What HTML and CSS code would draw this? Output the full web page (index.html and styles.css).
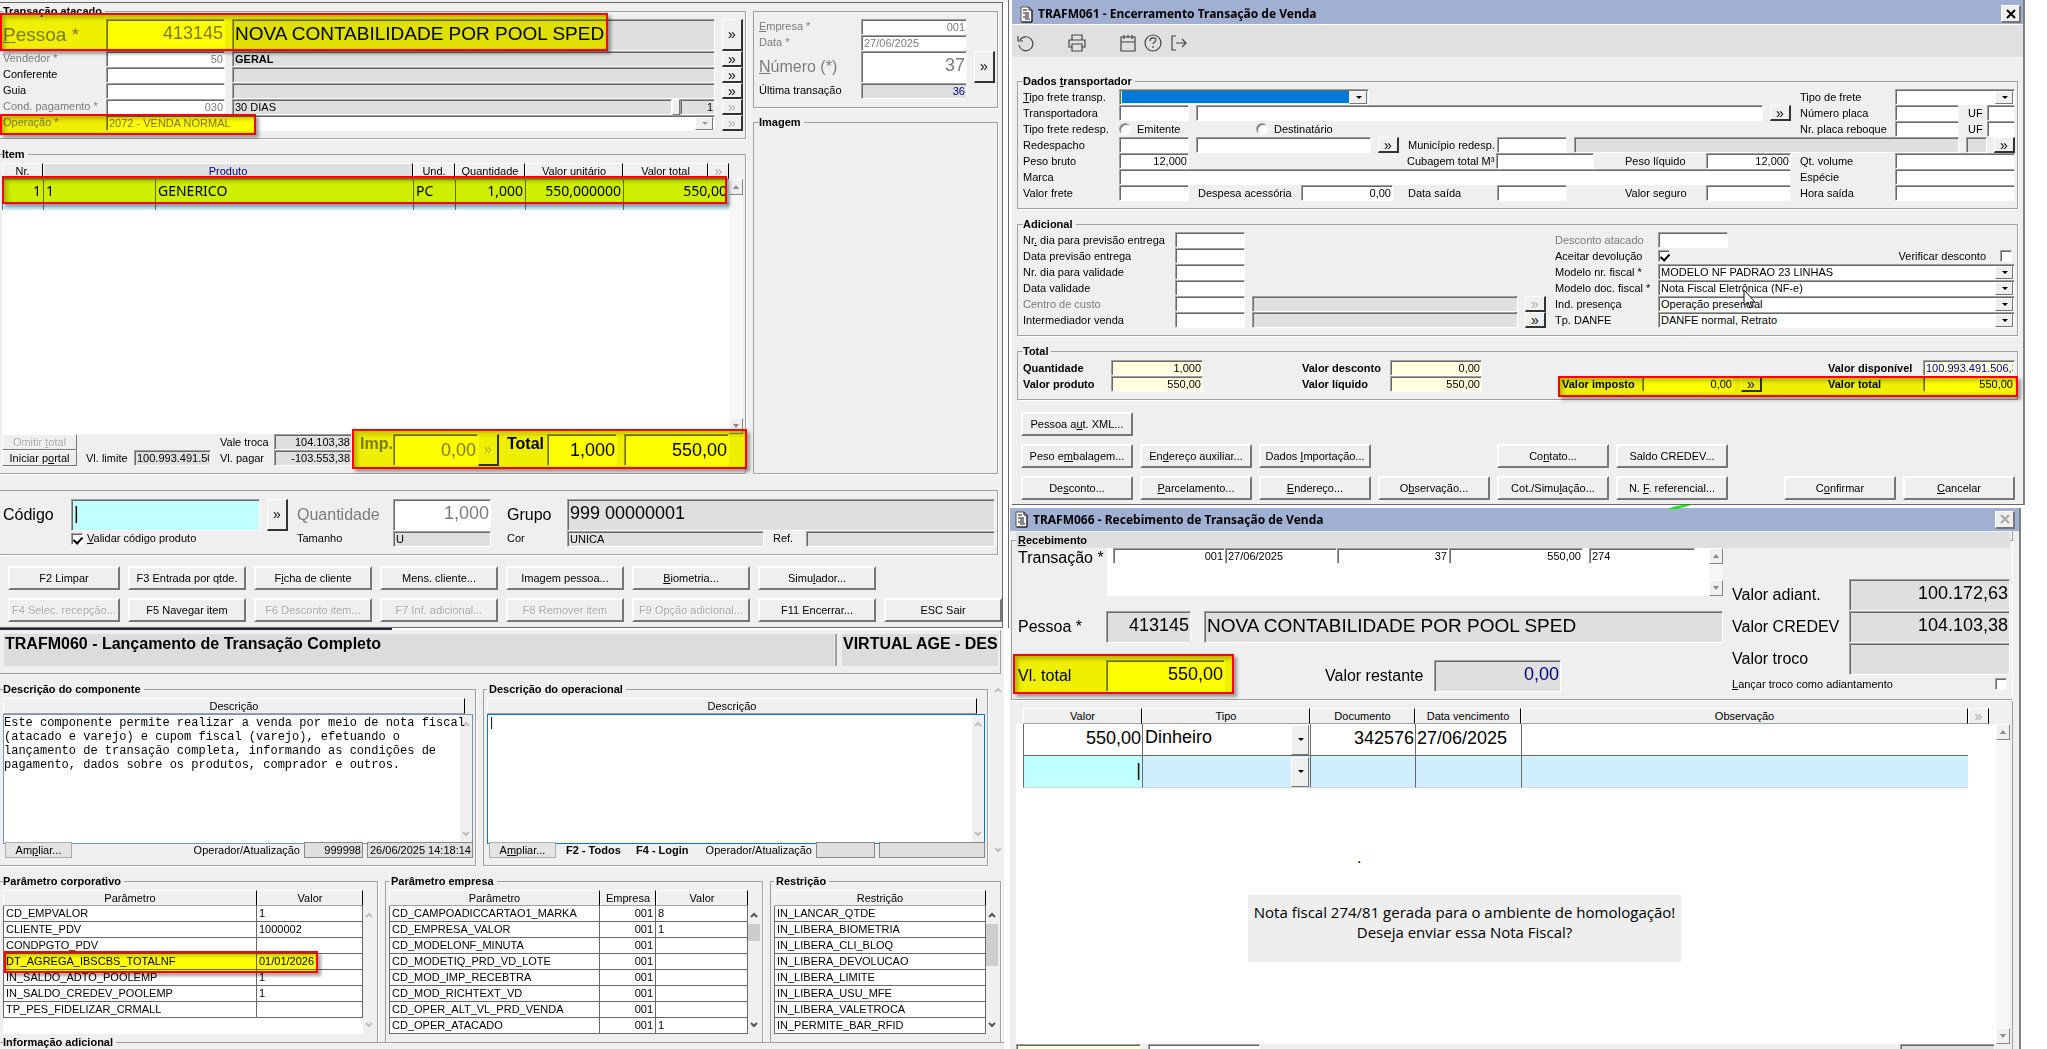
FILE: index.html
```html
<!DOCTYPE html>
<html lang="pt-BR">
<head>
    <meta charset="UTF-8">
    <meta name="viewport" content="width=device-width, initial-scale=1.0">
    <title>Transação de Venda</title>
    <link rel="stylesheet" href="styles.css">
</head>
<body>
    <svg class="defs" aria-hidden="true">
        <symbol id="doc" viewBox="0 0 13 17">
            <path d="M1 1h8l3 3v12H1z" fill="#fff" stroke="#555"/>
            <path d="M9 1v3h3" fill="none" stroke="#111"/>
            <path d="M3 4h4M3 7h6M5 9h4M3 11h6M5 13h5" stroke="#111" stroke-width="1"/>
            <path d="M12 4v12H2" fill="none" stroke="#111"/>
        </symbol>
        <symbol id="chev" viewBox="0 0 8 8"><path d="M1 6l3-3 3 3" fill="none" stroke="currentColor" stroke-width="2"/></symbol>
        <symbol id="tri" viewBox="0 0 8 8"><path d="M1 6l3-4 3 4z" fill="#8a8a8a"/></symbol>
        <symbol id="cross" viewBox="0 0 10 10"><path d="M1 1l8 8M9 1l-8 8" stroke="currentColor" stroke-width="2"/></symbol>
    </svg>

    <main class="desk">
        <div class="left-col">
            <!-- TRAFM060: lançamento -->
            <div class="sale-edge">
            <section class="window sale">
                <div class="sale-top">
                    <div class="sale-main">
                        <fieldset class="cut">
                            <legend>Transação atacado</legend>
                            <div class="row tall"><label class="w-96 big dim" for="pessoa"><u>P</u>essoa *</label><input id="pessoa" class="w-119 num dim" value="413145"><input class="grow ro name" readonly aria-label="Nome pessoa" value="NOVA CONTABILIDADE POR POOL SPED"><button class="more">»</button></div>
                            <div class="row"><label class="w-96 dim" for="vend">Vendedor *</label><input id="vend" class="w-119 num dim" value="50"><input class="grow ro strong" readonly aria-label="Nome vendedor" value="GERAL"><button class="more">»</button></div>
                            <div class="row"><label class="w-96" for="conf">Conferente</label><input id="conf" class="w-119"><input class="grow ro" readonly aria-label="Nome conferente"><button class="more">»</button></div>
                            <div class="row"><label class="w-96" for="guia">Guia</label><input id="guia" class="w-119"><input class="grow ro" readonly aria-label="Nome guia"><button class="more">»</button></div>
                            <div class="row"><label class="w-96 dim" for="cond">Cond. pagamento *</label><input id="cond" class="w-119 num dim" value="030"><span class="pay grow"><input class="grow ro" readonly aria-label="Condição" value="30 DIAS"><i class="thumb"></i><input class="w-35 ro num" readonly aria-label="Parcelas" value="1"></span><button class="more" disabled>»</button></div>
                            <div class="row"><label class="w-96 dim" for="oper">Operação *</label><span class="combo grow off"><select id="oper" disabled><option>2072 - VENDA NORMAL</option></select></span><button class="more" disabled>»</button></div>
                        </fieldset>

                        <fieldset class="cut items">
                            <legend>Item</legend>
                            <div class="item-area">
                                <div class="sheet">
                                    <table class="item-table">
                                        <colgroup><col class="w-41"><col class="w-112"><col><col class="w-42"><col class="w-70"><col class="w-98"><col class="w-85"><col class="w-21"></colgroup>
                                        <thead>
                                            <tr><th>Nr.</th><th colspan="2" class="sel">Produto</th><th>Und.</th><th>Quantidade</th><th>Valor unitário</th><th>Valor total</th><th class="off">»</th></tr>
                                        </thead>
                                        <tbody>
                                            <tr><td class="num">1</td><td>1</td><td>GENERICO</td><td>PC</td><td class="num">1,000</td><td class="num">550,000000</td><td class="num" colspan="2">550,00</td></tr>
                                            <tr class="stub"><td></td><td></td><td></td><td></td><td></td><td></td><td colspan="2"></td></tr>
                                        </tbody>
                                    </table>
                                </div>
                                <div class="bar"><button aria-label="Subir"><svg><use href="#tri"/></svg></button><button aria-label="Descer" class="down"><svg><use href="#tri"/></svg></button></div>
                            </div>
                            <div class="totals">
                                <div class="mini">
                                    <button class="btn" disabled>Omitir <u>t</u>otal</button><span></span><span></span><label for="vtroca">Vale troca</label><input id="vtroca" class="ro num" readonly value="104.103,38">
                                    <button class="btn">Iniciar p<u>o</u>rtal</button><label for="vlim">Vl. limite</label><input id="vlim" class="ro" readonly value="100.993.491.506,38"><label for="vpag">Vl. pagar</label><input id="vpag" class="ro num" readonly value="-103.553,38">
                                </div>
                                <label class="w-41 med strong dim" for="imp">Imp.</label><input id="imp" class="w-85 big-num num dim" value="0,00"><button class="more" disabled>»</button>
                                <label class="w-48 med strong" for="tot">Total</label><input id="tot" class="w-70 big-num num" value="1,000"><input class="grow big-num num gap" aria-label="Valor total" value="550,00">
                            </div>
                        </fieldset>
                    </div>

                    <div class="sale-side">
                        <fieldset>
                            <legend class="blank">&nbsp;</legend>
                            <div class="row"><label class="w-95 dim" for="emp"><u>E</u>mpresa *</label><input id="emp" class="w-106 num dim" value="001"></div>
                            <div class="row"><label class="w-95 dim" for="data">Data *</label><input id="data" class="w-106 dim" value="27/06/2025"></div>
                            <div class="row tall"><label class="w-95 med dim" for="numero"><u>N</u>úmero (*)</label><input id="numero" class="w-106 num dim" value="37"><button class="more">»</button></div>
                            <div class="row"><label class="w-95" for="ult">Última transação</label><input id="ult" class="w-106 ro num navy" readonly value="36"></div>
                        </fieldset>
                        <fieldset class="image-box"><legend>Imagem</legend></fieldset>
                    </div>
                </div>

                <div class="code-box">
                    <div class="row tall"><label class="w-61 med" for="cod">Código</label><input id="cod" class="w-189 cyan" value="|"><button class="more">»</button><label class="w-91 med dim" for="qtd">Quantidade</label><input id="qtd" class="w-98 num dim" value="1,000"><label class="w-62 med far" for="grupo">Grupo</label><input id="grupo" class="grow ro" readonly value="999 00000001"></div>
                    <div class="row"><span class="w-61"></span><label class="w-217 tick"><input type="checkbox" checked><span><u>V</u>alidar código produto</span></label><label class="w-91" for="tam">Tamanho</label><input id="tam" class="w-98 ro" readonly value="U"><label class="w-62 far" for="cor">Cor</label><input id="cor" class="grow ro" readonly value="UNICA"><label class="w-28" for="ref">Ref.</label><input id="ref" class="w-189 ro" readonly></div>
                </div>

                <div class="keys">
                    <button class="btn">F2 Limpar</button><button class="btn">F3 Entrada por qtde.</button><button class="btn">F<u>i</u>cha de cliente</button><button class="btn">Mens. cliente...</button><button class="btn">Ima<u>g</u>em pessoa...</button><button class="btn"><u>B</u>iometria...</button><button class="btn">Simu<u>l</u>ador...</button><span></span>
                    <button class="btn" disabled>F4 Selec. recepção...</button><button class="btn">F5 Navegar item</button><button class="btn" disabled>F6 Desconto item...</button><button class="btn" disabled>F7 Inf. adicional...</button><button class="btn" disabled>F8 Remover item</button><button class="btn" disabled>F9 Opção adicional...</button><button class="btn">F11 Encerrar...</button><button class="btn">ESC Sair</button>
                </div>

                <!-- marcações -->
                <div class="mark mark-person"></div>
                <div class="mark mark-oper"></div>
                <div class="mark mark-item"></div>
                <div class="mark mark-total"></div>
            </section>
            </div>

            <!-- TRAFM060: componente e parâmetros -->
            <section class="component">
                <header class="comp-head"><h1>TRAFM060 - Lançamento de Transação Completo</h1><h2>VIRTUAL AGE - DES</h2></header>
                <div class="descs">
                    <fieldset class="cut desc-a">
                        <legend>Descrição do componente</legend>
                        <div class="th">Descrição</div>
                        <div class="memo"><textarea aria-label="Descrição do componente" wrap="off">Este componente permite realizar a venda por meio de nota fiscal
(atacado e varejo) e cupom fiscal (varejo), efetuando o
lançamento de transação completa, informando as condições de
pagamento, dados sobre os produtos, comprador e outros.</textarea><div class="flat pale"><svg><use href="#chev"/></svg><svg class="down"><use href="#chev"/></svg></div></div>
                        <div class="row foot"><button class="zoom-btn">Am<u>p</u>liar...</button><label class="push" for="op1">Operador/Atualização</label><input id="op1" class="w-59 ro num" readonly value="999998"><input class="w-106 ro" readonly aria-label="Atualização" value="26/06/2025 14:18:14"></div>
                    </fieldset>
                    <fieldset class="desc-b">
                        <legend>Descrição do operacional</legend>
                        <div class="th">Descrição</div>
                        <div class="memo focus"><textarea aria-label="Descrição do operacional">|</textarea><div class="flat pale"><svg><use href="#chev"/></svg><svg class="down"><use href="#chev"/></svg></div></div>
                        <div class="row foot"><button class="zoom-btn">A<u>m</u>pliar...</button><b class="hint">F2 - Todos</b><b class="hint">F4 - Login</b><label class="push" for="op2">Operador/Atualização</label><input id="op2" class="w-59 ro" readonly><input class="w-106 ro" readonly aria-label="Atualização"></div>
                    </fieldset>
                    <div class="flat pale outer"><svg><use href="#chev"/></svg><svg class="down"><use href="#chev"/></svg></div>
                </div>

                <div class="params">
                    <fieldset class="cut par-a">
                        <legend>Parâmetro corporativo</legend>
                        <div class="list">
                            <table>
                                <colgroup><col><col class="w-106"></colgroup>
                                <thead><tr><th>Parâmetro</th><th>Valor</th></tr></thead>
                                <tbody>
                                    <tr><td>CD_EMPVALOR</td><td>1</td></tr>
                                    <tr><td>CLIENTE_PDV</td><td>1000002</td></tr>
                                    <tr><td>CONDPGTO_PDV</td><td></td></tr>
                                    <tr><td>DT_AGREGA_IBSCBS_TOTALNF</td><td>01/01/2026</td></tr>
                                    <tr><td>IN_SALDO_ADTO_POOLEMP</td><td>1</td></tr>
                                    <tr><td>IN_SALDO_CREDEV_POOLEMP</td><td>1</td></tr>
                                    <tr><td>TP_PES_FIDELIZAR_CRMALL</td><td></td></tr>
                                </tbody>
                            </table>
                            <div class="flat pale"><svg><use href="#chev"/></svg><svg class="down"><use href="#chev"/></svg></div>
                        </div>
                        <div class="mark mark-param"></div>
                    </fieldset>
                    <fieldset class="par-b">
                        <legend>Parâmetro empresa</legend>
                        <div class="list">
                            <table>
                                <colgroup><col><col class="w-56"><col class="w-92"></colgroup>
                                <thead><tr><th>Parâmetro</th><th>Empresa</th><th>Valor</th></tr></thead>
                                <tbody>
                                    <tr><td>CD_CAMPOADICCARTAO1_MARKA</td><td class="num">001</td><td>8</td></tr>
                                    <tr><td>CD_EMPRESA_VALOR</td><td class="num">001</td><td>1</td></tr>
                                    <tr><td>CD_MODELONF_MINUTA</td><td class="num">001</td><td></td></tr>
                                    <tr><td>CD_MODETIQ_PRD_VD_LOTE</td><td class="num">001</td><td></td></tr>
                                    <tr><td>CD_MOD_IMP_RECEBTRA</td><td class="num">001</td><td></td></tr>
                                    <tr><td>CD_MOD_RICHTEXT_VD</td><td class="num">001</td><td></td></tr>
                                    <tr><td>CD_OPER_ALT_VL_PRD_VENDA</td><td class="num">001</td><td></td></tr>
                                    <tr><td>CD_OPER_ATACADO</td><td class="num">001</td><td>1</td></tr>
                                </tbody>
                            </table>
                            <div class="flat"><svg><use href="#chev"/></svg><i class="grip"></i><svg class="down"><use href="#chev"/></svg></div>
                        </div>
                    </fieldset>
                    <fieldset class="par-c">
                        <legend>Restrição</legend>
                        <div class="list">
                            <table>
                                <thead><tr><th>Restrição</th></tr></thead>
                                <tbody>
                                    <tr><td>IN_LANCAR_QTDE</td></tr>
                                    <tr><td>IN_LIBERA_BIOMETRIA</td></tr>
                                    <tr><td>IN_LIBERA_CLI_BLOQ</td></tr>
                                    <tr><td>IN_LIBERA_DEVOLUCAO</td></tr>
                                    <tr><td>IN_LIBERA_LIMITE</td></tr>
                                    <tr><td>IN_LIBERA_USU_MFE</td></tr>
                                    <tr><td>IN_LIBERA_VALETROCA</td></tr>
                                    <tr><td>IN_PERMITE_BAR_RFID</td></tr>
                                </tbody>
                            </table>
                            <div class="flat"><svg><use href="#chev"/></svg><i class="grip long"></i><svg class="down"><use href="#chev"/></svg></div>
                        </div>
                    </fieldset>
                </div>
                <fieldset class="cut info"><legend>Informação adicional</legend></fieldset>
            </section>
        </div>

        <div class="right-col">
            <!-- TRAFM061 -->
            <section class="window closing">
                <header class="title"><svg class="doc"><use href="#doc"/></svg><h2>TRAFM061 - Encerramento Transação de Venda</h2><button class="close" aria-label="Fechar"><svg><use href="#cross"/></svg></button></header>
                <nav class="tools">
                    <button aria-label="Desfazer"><svg viewBox="0 0 18 18"><path d="M3 6a7 7 0 1 1-1 5M1 2v5h5"/></svg></button>
                    <button aria-label="Imprimir" class="t-print"><svg viewBox="0 0 18 18"><path d="M4 6V1h10v5M4 13H1V6h16v7h-3M4 10h10v7H4z"/></svg></button>
                    <button aria-label="Calendário" class="t-cal"><svg viewBox="0 0 18 18"><path d="M2 3h14v14H2zM2 8h14M5 1v4M9 1v3M13 1v4"/></svg></button>
                    <button aria-label="Ajuda"><svg viewBox="0 0 18 18"><circle cx="9" cy="9" r="8"/><path d="M6 7c0-4 6-4 6-1 0 2-3 2-3 4M9 12v2"/></svg></button>
                    <button aria-label="Sair"><svg viewBox="0 0 18 18"><path d="M7 2H3v14h4M7 9h10M13 5l4 4-4 4"/></svg></button>
                </nav>

                <div class="closing-body">
                    <fieldset>
                        <legend>Dados <u>t</u>ransportador</legend>
                        <div class="row"><label class="w-89" for="tft"><u>T</u>ipo frete transp.</label><span class="combo w-250 picked"><select id="tft"><option></option></select></span><span class="side push"><label class="w-88" for="tdf">Tipo de frete</label><span class="combo grow"><select id="tdf"><option></option></select></span></span></div>
                        <div class="row"><label class="w-89" for="transp">Transportadora</label><input id="transp" class="w-70"><input class="grow" aria-label="Nome transportadora"><button class="more">»</button><span class="side"><label class="w-88" for="placa">Número placa</label><input id="placa" class="w-64"><label class="w-14" for="uf1">UF</label><input id="uf1" class="w-28"></span></div>
                        <div class="row"><span class="w-89">Tipo frete redesp.</span><label class="radio w-130"><input type="radio" name="redesp">Emitente</label><label class="radio"><input type="radio" name="redesp">Destinatário</label><span class="side push"><label class="w-88" for="reboque">Nr. placa reboque</label><input id="reboque" class="w-64"><label class="w-14" for="uf2">UF</label><input id="uf2" class="w-28"></span></div>
                        <div class="row"><label class="w-89" for="redes">Redespacho</label><input id="redes" class="w-70"><input class="w-175" aria-label="Nome redespacho"><button class="more">»</button><label class="w-84" for="munic">Município redesp.</label><input id="munic" class="w-70"><input class="grow ro" readonly aria-label="Nome município"><input class="w-21 ro" readonly aria-label="Estado"><button class="more">»</button></div>
                        <div class="row"><label class="w-89" for="pb">Peso bruto</label><input id="pb" class="w-70 num" value="12,000"><label class="w-84 push" for="cub">Cubagem total M³</label><input id="cub" class="w-98"><label class="w-98 right-lab" for="pl">Peso líquido</label><input id="pl" class="w-85 num" value="12,000"><span class="side"><label class="w-88" for="qv">Qt. volume</label><input id="qv" class="grow"></span></div>
                        <div class="row"><label class="w-89" for="marca">Marca</label><input id="marca" class="grow"><span class="side"><label class="w-88" for="esp">Espécie</label><input id="esp" class="grow"></span></div>
                        <div class="row"><label class="w-89" for="vf">Valor frete</label><input id="vf" class="w-70"><label class="w-98" for="da">Despesa acessória</label><input id="da" class="w-92 num" value="0,00"><label class="w-84 push" for="ds">Data saída</label><input id="ds" class="w-70"><label class="w-125" for="vs">Valor seguro</label><input id="vs" class="w-85"><span class="side"><label class="w-88" for="hs">Hora saída</label><input id="hs" class="grow"></span></div>
                    </fieldset>

                    <fieldset>
                        <legend>Adicional</legend>
                        <div class="split">
                            <div class="grow">
                                <div class="row"><label class="w-145" for="ne">Nr<u>.</u> dia para previsão entrega</label><input id="ne" class="w-70"></div>
                                <div class="row"><label class="w-145" for="de">Data previsão entrega</label><input id="de" class="w-70"></div>
                                <div class="row"><label class="w-145" for="nv">Nr. dia para validade</label><input id="nv" class="w-70"></div>
                                <div class="row"><label class="w-145" for="dv">Data validade</label><input id="dv" class="w-70"></div>
                                <div class="row"><label class="w-145 dim" for="cc">Centro de custo</label><input id="cc" class="w-70"><input class="grow ro" readonly aria-label="Nome centro de custo"><button class="more" disabled>»</button></div>
                                <div class="row"><label class="w-145" for="iv">Intermediador venda</label><input id="iv" class="w-70"><input class="grow ro" readonly aria-label="Nome intermediador"><button class="more">»</button></div>
                            </div>
                            <div class="w-460">
                                <div class="row"><label class="w-96 dim" for="desat">Desconto atacado</label><input id="desat" class="w-70"></div>
                                <div class="row"><label class="w-96" for="adev">Aceitar devolução</label><input id="adev" type="checkbox" checked><label class="push verify" for="vdes">Verificar desconto</label><input id="vdes" type="checkbox" class="end"></div>
                                <div class="row"><label class="w-96" for="mnf">Modelo nr. fiscal *</label><span class="combo grow"><select id="mnf"><option>MODELO NF PADRAO 23 LINHAS</option></select></span></div>
                                <div class="row"><label class="w-96" for="mdf">Modelo doc. fiscal *</label><span class="combo grow"><select id="mdf"><option>Nota Fiscal Eletrônica (NF-e)</option></select></span></div>
                                <div class="row"><label class="w-96" for="ip">Ind. presença</label><span class="combo grow"><select id="ip"><option>Operação presencial</option></select></span></div>
                                <div class="row"><label class="w-96" for="danfe">Tp. DANFE</label><span class="combo grow"><select id="danfe"><option>DANFE normal, Retrato</option></select></span></div>
                                <svg class="pointer" viewBox="0 0 14 20"><path d="M1 1v15l4-3 2 6 2-1-2-5h5z" fill="#fff" stroke="#111"/></svg>
                            </div>
                        </div>
                    </fieldset>

                    <fieldset class="sum">
                        <legend>Total</legend>
                        <div class="split">
                            <div>
                                <div class="row"><label class="w-81" for="sq">Quantidade</label><input id="sq" class="w-92 cream num" value="1,000"></div>
                                <div class="row"><label class="w-81" for="sp">Valor produto</label><input id="sp" class="w-92 cream num" value="550,00"></div>
                            </div>
                            <div class="sum-b">
                                <div class="row"><label class="w-81" for="sd">Valor desconto</label><input id="sd" class="w-92 cream num" value="0,00"></div>
                                <div class="row"><label class="w-81" for="sl">Valor líquido</label><input id="sl" class="w-92 cream num" value="550,00"></div>
                            </div>
                            <div class="sum-c">
                                <div class="row"></div>
                                <div class="row"><label class="w-73" for="si">Valor imposto</label><input id="si" class="w-92 cream num" value="0,00"><button class="more">»</button></div>
                            </div>
                            <div class="push">
                                <div class="row"><label class="w-88" for="sv">Valor disponível</label><input id="sv" class="w-92 cream navy" value="100.993.491.506,38"></div>
                                <div class="row"><label class="w-88" for="st">Valor total</label><input id="st" class="w-92 cream num" value="550,00"></div>
                            </div>
                        </div>
                        <div class="mark mark-tax"></div>
                    </fieldset>

                    <div class="actions"><button class="btn">Pessoa a<u>u</u>t. XML...</button></div>
                    <div class="actions"><button class="btn">Peso e<u>m</u>balagem...</button><button class="btn">En<u>d</u>ereço auxiliar...</button><button class="btn">Dados <u>I</u>mportação...</button><span class="btn-space"></span><button class="btn">Co<u>n</u>tato...</button><button class="btn">Saldo CREDEV...</button></div>
                    <div class="actions"><button class="btn">De<u>s</u>conto...</button><button class="btn"><u>P</u>arcelamento...</button><button class="btn"><u>E</u>ndereço...</button><button class="btn">O<u>b</u>servação...</button><button class="btn">Cot./Simu<u>l</u>ação...</button><button class="btn">N. <u>F</u>. referencial...</button><button class="btn push">C<u>o</u>nfirmar</button><button class="btn"><u>C</u>ancelar</button></div>
                </div>
                <svg class="sliver" viewBox="0 0 24 4"><path d="M0 4Q8 1 16 0h8Q14 3 8 4z" fill="#0e0"/></svg>
            </section>

            <!-- TRAFM066 -->
            <section class="receipt">
                <header class="title"><svg class="doc"><use href="#doc"/></svg><h2>TRAFM066 - Recebimento de Transação de Venda</h2><button class="close" aria-label="Fechar" disabled><svg><use href="#cross"/></svg></button></header>
                <div class="receipt-body">
                    <fieldset class="rec">
                        <legend><u>R</u>ecebimento</legend>
                        <div class="split">
                            <div class="rec-main">
                                <div class="trans">
                                    <label class="w-89 med" for="tr1">Transação *</label>
                                    <div class="trans-sheet"><input id="tr1" class="w-112 num" value="001"><input class="w-112" aria-label="Data" value="27/06/2025"><input class="w-112 num" aria-label="Número" value="37"><input class="grow num" aria-label="Valor" value="550,00"><input class="w-106 nf" aria-label="Nota" value="274"></div>
                                    <div class="bar"><button aria-label="Subir"><svg><use href="#tri"/></svg></button><button aria-label="Descer" class="down"><svg><use href="#tri"/></svg></button></div>
                                </div>
                                <div class="row tall rec-person"><label class="w-81 med" for="rp">Pessoa *</label><input id="rp" class="w-85 ro num" readonly value="413145"><input class="grow ro name" readonly aria-label="Nome" value="NOVA CONTABILIDADE POR POOL SPED"></div>
                                <div class="row tall rec-total"><label class="w-81 med" for="rt">Vl. total</label><input id="rt" class="w-119 num" value="550,00"><label class="w-102 med rest" for="rr">Valor restante</label><input id="rr" class="w-127 ro num navy" readonly value="0,00"></div>
                            </div>
                            <div class="rec-side">
                                <div class="row tall"><label class="w-110 med" for="ra">Valor adiant.</label><input id="ra" class="grow ro num" readonly value="100.172,63"></div>
                                <div class="row tall"><label class="w-110 med" for="rc">Valor CREDEV</label><input id="rc" class="grow ro num" readonly value="104.103,38"></div>
                                <div class="row tall"><label class="w-110 med" for="ro">Valor troco</label><input id="ro" class="grow ro" readonly></div>
                                <div class="row"><label for="lt"><u>L</u>ançar troco como adiantamento</label><input id="lt" type="checkbox" class="push end"></div>
                            </div>
                        </div>
                        <div class="mark mark-vl"></div>
                    </fieldset>

                    <div class="pay-area">
                        <div class="sheet">
                            <table class="pay-table">
                                <colgroup><col class="w-119"><col class="w-168"><col class="w-105"><col class="w-106"><col><col class="w-21"></colgroup>
                                <thead><tr><th>Valor</th><th>Tipo</th><th>Documento</th><th>Data vencimento</th><th>Observação</th><th class="off">»</th></tr></thead>
                                <tbody>
                                    <tr><td class="num">550,00</td><td class="pick"><span class="combo"><select aria-label="Tipo"><option>Dinheiro</option></select></span></td><td class="num">342576</td><td>27/06/2025</td><td></td><td class="none"></td></tr>
                                    <tr class="new"><td class="num now">|</td><td class="pick"><span class="combo"><select aria-label="Tipo"><option></option></select></span></td><td></td><td></td><td></td><td class="none"></td></tr>
                                </tbody>
                            </table>
                            <p class="dot">.</p>
                            <div class="message">Nota fiscal 274/81 gerada para o ambiente de homologação!<br>Deseja enviar essa Nota Fiscal?</div>
                        </div>
                        <div class="bar"><button aria-label="Subir"><svg><use href="#tri"/></svg></button><button aria-label="Descer" class="down"><svg><use href="#tri"/></svg></button></div>
                    </div>
                    <div class="row pay-foot"><input class="w-125 cream" aria-label="Soma"><input class="w-112" aria-label="Filtro"><input class="w-95 ro push" readonly aria-label="Saldo"></div>
                </div>
            </section>
        </div>
    </main>
</body>
</html>
```
FILE: styles.css
```css
:root {
    --face: #efefef;
    --ro: #dfdfdf;
    --line: #a0a0a0;
    --dark: #696969;
    --dim: #7b7b7b;
}

* {
    box-sizing: border-box;
}

body {
    margin: 0;
    height: 100vh;
    overflow: hidden;
    background: #fff;
    color: #000;
    font: 11px/16px "Liberation Sans", Arial, sans-serif;
}

h1, h2, p {
    margin: 0;
}

.defs {
    position: absolute;
    width: 0;
    height: 0;
}

.desk {
    display: grid;
    grid-template-columns: 1010fr 1037fr;
}

.left-col, .right-col {
    min-width: 0;
}

/* Groups and rows */
fieldset {
    position: relative;
    min-width: 0;
    margin: 0;
    padding: 0 2px 7px 5px;
    border: 1px solid var(--line);
    box-shadow: 1px 1px #fff;
}

fieldset.cut {
    border-left: 0;
    padding-left: 3px;
}

legend {
    padding: 0 3px 0 0;
    font-weight: bold;
    line-height: 16px;
}

legend.blank {
    padding: 0;
    width: 0;
    overflow: hidden;
}

.row {
    display: flex;
    gap: 7px;
    height: 16px;
}

.row.tall {
    height: 32px;
}

.row > *, .side > *, .pay > *, .totals > * {
    flex-shrink: 0;
}

.grow {
    flex: 1 1 0 !important;
    min-width: 0;
}

.split {
    display: flex;
}

label {
    white-space: nowrap;
}

.tall label {
    line-height: 32px;
}

.dim {
    color: var(--dim);
}

.strong {
    font-weight: bold;
}

.med {
    font-size: 16px;
}

.big {
    font-size: 19px;
}

.navy {
    color: #000080 !important;
}

/* Fields */
input, select, textarea, button {
    margin: 0;
    font: inherit;
    color: inherit;
    border-radius: 0;
}

input {
    height: 100%;
    min-width: 0;
    padding: 0 1px 0 2px;
    background: #fff;
    border: 1px solid;
    border-color: var(--line) #fff #fff var(--line);
    box-shadow: inset 1px 1px var(--dark);
    outline: 0;
}

.tall input {
    font-size: 18px;
    padding-bottom: 3px;
}

.tall input.name {
    font-size: 19px;
}

input.dim {
    color: var(--dim);
}

.ro {
    background: var(--ro);
}

.cyan {
    background: #c0ffff;
}

.cream {
    background: #ffffdf;
}

.num {
    text-align: right;
}

input[type=checkbox], input[type=radio] {
    appearance: none;
    width: 12px;
    height: 12px;
    padding: 0;
    margin-top: 2px;
    position: relative;
    flex: none;
}

input[type=radio] {
    border-radius: 50%;
    margin-right: 6px;
}

input[type=checkbox]:checked::after {
    content: "";
    position: absolute;
    left: 3px;
    top: 1px;
    width: 4px;
    height: 7px;
    border: solid #000;
    border-width: 0 2px 2px 0;
    transform: rotate(42deg);
}

input.end {
    margin-right: 3px;
}

.radio, .tick {
    display: flex;
}

.tick {
    gap: 4px;
}

.combo {
    position: relative;
    display: block;
    height: 16px;
    background: #fff;
    border: 1px solid;
    border-color: var(--line) #fff #fff var(--line);
    box-shadow: inset 1px 1px var(--dark);
}

.combo select {
    appearance: none;
    display: block;
    width: 100%;
    height: 14px;
    padding: 0 16px 0 2px;
    border: 0;
    background: none;
    line-height: 14px;
    opacity: 1;
}

.combo::before, .combo::after {
    content: "";
    position: absolute;
    pointer-events: none;
}

.combo::before {
    right: 1px;
    top: 1px;
    bottom: 0;
    width: 16px;
    background: var(--face);
    border: 1px solid;
    border-color: #fff #777 #777 #fff;
}

.combo::after {
    right: 6px;
    top: 6px;
    border: 3px solid transparent;
    border-top-color: #000;
    border-bottom: 0;
}

.combo.off::after {
    border-top-color: #999;
}

.combo.off select {
    color: var(--dim);
}

.combo.picked {
    background: linear-gradient(#0078d7, #0078d7) 2px 1px / 229px 12px no-repeat #c0ffff;
}

/* Buttons */
button {
    padding: 0;
    background: var(--face);
    border: 1px solid;
    border-color: #fff #333 #333 #fff;
    line-height: 1;
}

.btn {
    border-width: 2px;
    border-color: #fff #777 #777 #fff;
    white-space: nowrap;
    overflow: hidden;
}

button:disabled {
    color: #a8a8a8;
    text-shadow: 1px 1px #fff;
}

.more {
    width: 21px;
    flex: none;
    padding-bottom: 2px;
    font-size: 14px;
    border-width: 1px 2px 2px 1px;
}

.push {
    margin-left: auto;
}

/* Scroll bars */
.bar {
    display: flex;
    flex-direction: column;
    justify-content: space-between;
    width: 14px;
    flex: none;
    background: #f7f7f7;
}

.bar button {
    height: 16px;
    border-color: #fff #888 #888 #fff;
}

.bar svg, .flat svg {
    display: block;
    width: 8px;
    height: 8px;
    margin: 0 auto;
}

svg.down, .down svg {
    transform: rotate(180deg);
}

.flat {
    display: flex;
    flex-direction: column;
    justify-content: space-between;
    width: 12px;
    padding: 5px 0;
    color: #555;
    background: #f0f0f0;
    flex: none;
}

.flat.pale {
    color: #c0c0c0;
}

.grip {
    height: 17px;
    margin-top: 5px;
    margin-bottom: auto;
    background: #cdcdcd;
}

.grip.long {
    height: 42px;
}

/* Tables */
table {
    width: 100%;
    table-layout: fixed;
    border-collapse: separate;
    border-spacing: 0;
}

th, .th {
    height: 16px;
    padding: 0;
    font-weight: normal;
    text-align: center;
    line-height: 14px;
    background: var(--face);
    border: 1px solid;
    border-color: #fff #000 var(--line) #fff;
    white-space: nowrap;
}

th.off {
    color: #a8a8a8;
    font-size: 14px;
    line-height: 12px;
}

td {
    padding: 0 2px;
    white-space: nowrap;
    overflow: hidden;
}

.sheet {
    position: relative;
    flex: 1;
    min-width: 0;
    background: linear-gradient(var(--face) 16px, #fff 16px);
}

/* Yellow markers drawn over the forms */
.mark {
    position: absolute;
    border: 2px solid #f00;
    box-shadow: 3px 3px 3px rgba(0, 0, 0, 0.35);
    pointer-events: none;
}

.mark::before {
    content: "";
    position: absolute;
    inset: 0;
    background: #ff0;
    box-shadow: inset 3px 3px 4px rgba(0, 0, 0, 0.25);
    mix-blend-mode: multiply;
}

.mark-person { left: 0; top: 10px; width: 608px; height: 38px; }
.mark-oper { left: 0; top: 111px; width: 256px; height: 21px; }
.mark-item { left: 2px; top: 173px; width: 725px; height: 28px; }
.mark-total { left: 352px; top: 426px; width: 395px; height: 40px; }
.mark-param { left: 4px; top: 62px; width: 314px; height: 22px; }
.mark-tax { right: -1px; top: 17px; width: 460px; height: 21px; }
.mark-vl { left: 1px; top: 106px; width: 221px; height: 40px; }

/* TRAFM060 */
.sale-edge {
    margin-right: 1px;
    padding: 2px 5px 0 0;
    border-right: 1px solid var(--dark);
    background: linear-gradient(#efefef 2px, #fff 2px);
}

.sale {
    position: relative;
    background: var(--face);
    border: 1px solid var(--dark);
    border-left: 0;
    padding-bottom: 4px;
}

.sale .row:not(.tall) label {
    line-height: 14px;
}

.sale-top {
    display: flex;
    gap: 7px;
    padding-right: 4px;
}

.sale-main {
    flex: 1;
    min-width: 0;
}

.sale-side {
    display: flex;
    flex-direction: column;
    width: 245px;
}

.sale-side fieldset {
    padding-left: 5px;
    padding-bottom: 8px;
}

.image-box {
    flex: 1;
    margin-top: 6px;
}

.pay {
    display: flex;
}

.thumb {
    width: 8px;
    background: var(--face);
    border: 1px solid;
    border-color: #fff #777 #777 #fff;
}

.items {
    margin-top: 7px;
}

fieldset.items {
    padding: 1px 2px 7px 2px;
}

.item-area {
    display: flex;
    height: 271px;
}

.item-area .bar {
    margin-top: 16px;
}

.item-table td {
    height: 24px;
    font: 14px/20px "Noto Sans", sans-serif;
    background: #cfefff;
    border-top: 1px solid var(--line);
    border-left: 1px solid var(--dark);
    padding: 0 2px 2px;
}

.item-table .stub td {
    height: 7px;
    padding: 0;
    line-height: 5px;
}

th.sel {
    background: var(--ro);
    color: #000080;
}

.totals {
    display: flex;
    height: 32px;
    padding-right: 14px;
}

.mini {
    display: grid;
    grid-template-columns: 75px 57px 77px 63px 78px;
    grid-template-rows: 16px 16px;
}

.mini .btn {
    border-width: 1px;
}

.mini label {
    padding-left: 9px;
}

.totals > label {
    padding-left: 8px;
    line-height: 20px;
}

.big-num {
    font-size: 18px;
}

.gap {
    margin-left: 7px;
}

.code-box {
    margin: 16px 4px 0 0;
    padding: 8px 2px 7px 3px;
    border: 1px solid var(--line);
    border-left: 0;
    box-shadow: 1px 1px #fff;
}

.code-box .w-91, .code-box .w-28 {
    padding-left: 2px;
}

.far {
    padding-left: 9px;
}

.keys {
    display: grid;
    grid-template-columns: 112fr repeat(7, 118fr);
    grid-auto-rows: 24px;
    gap: 8px;
    padding: 11px 0 1px 8px;
}

/* Component description */
.component {
    margin-right: 6px;
    padding-top: 2px;
    background: linear-gradient(90deg, #252a3a 392px, #fff 392px) 0 0 / 100% 2px no-repeat var(--face);
}

.comp-head {
    display: flex;
    margin-right: 3px;
    height: 44px;
    border: 1px solid var(--line);
    border-left: 0;
    border-top: 0;
}

.comp-head h1, .comp-head h2 {
    height: 32px;
    margin-top: 4px;
    background: #dcdcdc;
    font-size: 16px;
    line-height: 20px;
    white-space: nowrap;
}

.comp-head h1 {
    flex: 1;
    margin-left: 4px;
    padding-left: 1px;
}

.comp-head h2 {
    width: 161px;
    padding-left: 1px;
    border-left: 5px solid var(--face);
    box-shadow: -2px 0 var(--line);
    margin: 4px 2px 0 3px;
}

.descs {
    display: flex;
    padding-top: 7px;
}

.desc-a {
    width: 476px;
}

fieldset.desc-a, fieldset.desc-b {
    padding: 1px 2px 7px 3px;
}

.desc-b {
    flex: 1;
    margin-left: 7px;
}

.desc-b legend, .par-b legend, .par-c legend {
    padding-left: 2px;
}

.th {
    margin-right: 8px;
}

.memo {
    display: flex;
    height: 130px;
    border: 1px solid #7a96b5;
    background: #fff;
}

.memo.focus {
    border-color: #0078d7;
}

.memo textarea {
    position: relative;
    z-index: 1;
    flex: 1;
    min-width: 0;
    margin-right: -8px;
    padding: 1px 0;
    border: 0;
    outline: 0;
    resize: none;
    overflow: hidden;
    background: none;
    font: 12px/14px "Liberation Mono", "Courier New", monospace;
}

.row.foot {
    position: relative;
    gap: 4px;
    margin-top: -2px;
}

.foot input {
    border-color: #888;
    box-shadow: none;
}

.zoom-btn {
    width: 67px;
    margin-left: 2px;
    background: #e4e4e4;
    border-color: #adadad;
}

.hint {
    width: 66px;
    padding-left: 6px;
}

.outer {
    margin-left: 4px;
    margin-bottom: 7px;
}

.params {
    display: flex;
    gap: 7px;
    margin-top: 7px;
}

.params fieldset {
    padding: 1px 2px 8px 3px;
    border-bottom: 0;
    box-shadow: 1px 0 #fff;
}

.par-a {
    width: 378px;
}

.par-b {
    width: 378px;
}

.par-c {
    flex: 1;
    margin-right: 3px;
}

.list {
    display: flex;
    height: 144px;
    background: linear-gradient(var(--face) 16px, #fff 16px);
}

.list table {
    flex: 1;
    align-self: flex-start;
}

.list td {
    height: 16px;
    line-height: 15px;
    border: 1px solid var(--dark);
    border-top: 0;
    border-left-width: 0;
}

.list td:first-child {
    border-left-width: 1px;
}

.list .flat {
    margin-top: 16px;
}

.info {
    margin-top: -8px;
    border-right: 0;
}

/* Title bars */
.title {
    display: flex;
    align-items: center;
    height: 23px;
    background: #a0b0d2;
}

.title h2 {
    flex: 1;
    padding-left: 5px;
    font: bold 12px/20px "Noto Sans", sans-serif;
}

.title .doc {
    width: 13px;
    height: 17px;
}

.close {
    width: 20px;
    height: 18px;
    border-width: 1px 2px 2px 1px;
    border-color: #fff #777 #777 #fff;
}

.close svg {
    display: block;
    width: 10px;
    height: 10px;
    margin: 0 auto;
}

/* TRAFM061 */
.closing {
    position: relative;
    width: 1013px;
    max-width: calc(100% - 23px);
    margin-left: 2px;
    background: var(--face);
    border-right: 2px solid #808080;
    border-bottom: 1px solid var(--dark);
}

.closing .title {
    height: 25px;
    padding: 4px 2px 0 8px;
    border-bottom: 1px solid #fff;
}

.tools {
    display: flex;
    gap: 7px;
    height: 32px;
    padding: 9px 0 0 5px;
    background: #e0e0e0;
}

.tools button {
    width: 18px;
    height: 18px;
    border: 0;
    background: none;
}

.tools svg {
    width: 18px;
    height: 18px;
    fill: none;
    stroke: #444;
    stroke-width: 1.2;
}

.t-print {
    margin-left: 26px;
}

.t-cal {
    margin-left: 26px;
}

.closing-body {
    padding: 16px 5px 4px 5px;
}

.closing-body fieldset + fieldset {
    margin-top: 7px;
}

.side {
    display: flex;
    gap: 7px;
    width: 215px;
    margin-left: 2px;
}

.side.push {
    margin-left: auto;
}

.row > .w-84, .side > .w-14, .row > .w-98 {
    padding-left: 2px;
}

.row > .right-lab {
    padding-left: 24px;
}

.row > .w-125:not(input) {
    padding-left: 51px;
}

.w-460 {
    position: relative;
    margin-left: 9px;
}

.verify {
    padding-right: 7px;
}

.pointer {
    position: absolute;
    left: 188px;
    top: 57px;
    width: 14px;
    height: 20px;
}

.sliver {
    position: absolute;
    right: 332px;
    bottom: -5px;
    width: 24px;
    height: 4px;
}

.sum label {
    font-weight: bold;
}

fieldset.sum {
    padding-top: 1px;
}

.sum-b {
    margin-left: 99px;
}

.sum-c {
    margin-left: 80px;
}

.actions {
    display: flex;
    gap: 7px;
    margin: 8px 3px 0 4px;
}

.sum + .actions {
    margin-top: 12px;
}

.actions .btn, .btn-space {
    width: 112px;
    height: 24px;
}

/* TRAFM066 */
.receipt {
    width: 1011px;
    max-width: calc(100% - 26px);
    margin-top: 3px;
    border-right: 2px solid #808080;
    background: var(--face);
}

.receipt .title {
    padding: 0 4px 0 5px;
}

.receipt-body {
    margin-right: 6px;
    padding: 1px 0 0 1px;
    border-right: 1px solid var(--line);
}

fieldset.rec {
    padding: 0 2px 7px 4px;
    border-right: 0;
}

.rec > legend {
    width: 100%;
    padding-left: 2px;
    background: var(--ro);
}

.rec > .split {
    padding-left: 2px;
}

.rec-main {
    flex: 1;
    min-width: 0;
}

.trans {
    display: flex;
    height: 48px;
}

.trans > label {
    line-height: 20px;
}

.trans-sheet {
    display: flex;
    flex: 1;
    min-width: 0;
    padding: 0 14px 32px 6px;
    background: #fff;
}

.nf {
    margin-left: 6px;
}

.rec-person {
    margin-top: 15px;
}

.rec-person .name {
    margin-left: 6px;
}

.rec-total {
    margin-top: 17px;
}

.rest {
    margin-left: 93px;
}

.rec-side {
    flex: none;
    width: 278px;
    margin-left: 9px;
    padding-top: 31px;
}

.rec-side .tall + .row:last-child {
    margin-top: 1px;
}

.pay-area {
    display: flex;
    height: 336px;
    padding: 0 2px 0 5px;
    margin-top: 8px;
}

.pay-area > .sheet {
    padding: 0 7px 0 7px;
}

.pay-area > .bar {
    margin-top: 16px;
}

.pay-table td {
    height: 32px;
    font-size: 18px;
    border-left: 1px solid var(--dark);
    border-bottom: 1px solid var(--dark);
    padding: 0 1px 3px;
}

.pay-table .new td {
    background: #cfefff;
    border-bottom-color: #d8d8d8;
}

.pay-table .new .now {
    background: #c0ffff;
}

.pay-table .none, .pay-table .new .none {
    background: #fff;
    border: 0;
}

.pay-table td.pick {
    padding: 0;
}

.pick .combo {
    height: 31px;
    border: 0;
    box-shadow: none;
    background: none;
}

.pick .combo select {
    height: 26px;
    line-height: 26px;
}

.pick .combo::after {
    top: 14px;
}

.dot {
    position: absolute;
    left: 341px;
    top: 142px;
    font-size: 16px;
}

.message {
    position: absolute;
    left: 232px;
    top: 187px;
    width: 433px;
    height: 67px;
    padding-top: 7px;
    background: #eee;
    text-align: center;
    font: 15px/20px "Open Sans", "Noto Sans", sans-serif;
    white-space: nowrap;
}

.pay-foot {
    padding: 0 17px 0 5px;
    gap: 7px;
}

/* Widths */
.w-14 { width: 14px; }
.w-21 { width: 21px; }
.w-28 { width: 28px; }
.w-35 { width: 35px; }
.w-41 { width: 41px; }
.w-42 { width: 42px; }
.w-48 { width: 48px; }
.w-56 { width: 56px; }
.w-59 { width: 59px; }
.w-61 { width: 61px; }
.w-62 { width: 62px; }
.w-64 { width: 64px; }
.w-70 { width: 70px; }
.w-73 { width: 73px; }
.w-81 { width: 81px; }
.w-85 { width: 85px; }
.w-84 { width: 84px; }
.w-88 { width: 88px; }
.w-89 { width: 89px; }
.w-91 { width: 91px; }
.w-92 { width: 92px; }
.w-95 { width: 95px; }
.w-96 { width: 96px; }
.w-98 { width: 98px; }
.w-102 { width: 102px; }
.w-105 { width: 105px; }
.w-106 { width: 106px; }
.w-110 { width: 110px; }
.w-112 { width: 112px; }
.w-119 { width: 119px; }
.w-125 { width: 125px; }
.w-127 { width: 127px; }
.w-130 { width: 130px; }
.w-145 { width: 145px; }
.w-168 { width: 168px; }
.w-175 { width: 175px; }
.w-189 { width: 189px; }
.w-217 { width: 217px; }
.w-250 { width: 250px; }
.w-460 { width: 460px; }
```
